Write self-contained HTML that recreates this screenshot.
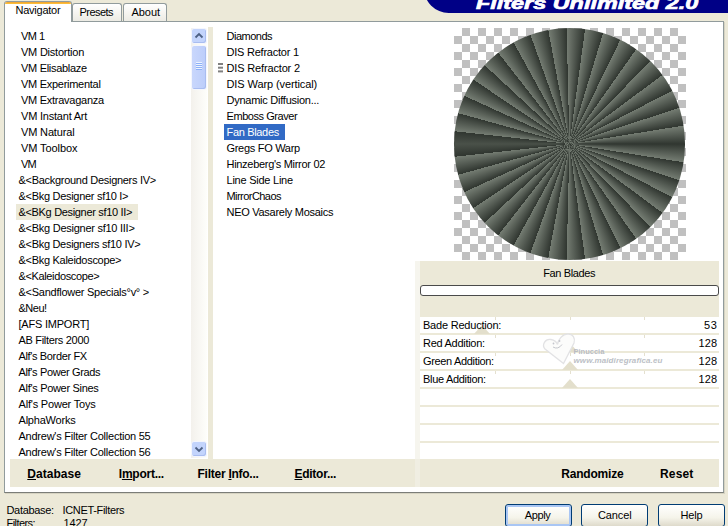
<!DOCTYPE html>
<html><head><meta charset="utf-8"><title>Filters Unlimited 2.0</title>
<style>
html,body{margin:0;padding:0}
body{width:728px;height:526px;overflow:hidden;background:#ece9d8;position:relative;font-family:"Liberation Sans",sans-serif;color:#000}
div,span{position:absolute;box-sizing:border-box}
.t{font-size:11px;line-height:16px;white-space:pre;height:16px}
.b{font-size:12px;line-height:16px;font-weight:bold;white-space:pre;height:16px}
.b u{text-decoration:underline;text-underline-offset:1px}
.ti{font-size:17px;line-height:24px;-webkit-text-stroke:0.7px #fff;font-weight:bold;font-style:italic;white-space:pre;transform-origin:0 50%}
#panel{left:4px;top:21px;width:720px;height:472px;background:#fff;border:1px solid #919b9c;border-bottom-color:#7b7d78;box-shadow:1px 1px 0 #d6d3c2}
#beige{left:10px;top:27px;width:709px;height:460px;background:#ece9d8}
.w{background:#fff}
.tab{border:1px solid #919b9c;border-bottom:none;border-radius:3px 3px 0 0;background:linear-gradient(#fff,#f4f3ee 60%,#ecebe4)}
.btn{top:504px;width:67px;height:23px;border:1px solid #003c74;border-radius:3px;background:linear-gradient(#fff,#f5f4ea 60%,#dedacb)}
.row{left:420px;width:299px;height:16px;background:#fff}
.tri{width:0;height:0;border-left:8.5px solid transparent;border-right:8.5px solid transparent;border-bottom:9px solid #e3dfcc}
</style></head><body>
<!-- title banner -->
<div style="left:424px;top:-37px;width:320px;height:49.8px;border-radius:24.7px 0 0 24.7px;background:#000086"></div>
<!-- main panel -->
<div id="panel"></div>
<div id="beige"></div>
<!-- tabs -->
<div class="tab" style="left:72px;top:3px;width:50px;height:18px"></div>
<div class="tab" style="left:123px;top:3px;width:44px;height:18px"></div>
<div style="left:5px;top:21px;width:66px;height:1px;background:#fff"></div>
<div style="left:4px;top:1px;width:68px;height:20px;background:#fff;border:1px solid #919b9c;border-bottom:none;border-radius:3px 3px 0 0;overflow:hidden"><div style="left:-1px;top:-1px;width:68px;height:3px;background:linear-gradient(#e68b2c,#ffc73c)"></div></div>
<!-- list 1 -->
<div class="w" style="left:10px;top:27px;width:198px;height:432px"></div>
<div style="left:16px;top:204px;width:122px;height:16px;background:#ece9d8"></div>
<!-- scrollbar -->
<div style="left:191px;top:28px;width:16px;height:430px;background:linear-gradient(90deg,#f3f1ec,#fefefb)"></div>
<div style="left:191px;top:28px;width:16px;height:16px;border:1px solid #f4f6fd;border-radius:3px;background:#c3d4fc;box-shadow:inset -1px -1px 0 #a9bdf0"></div>
<svg style="position:absolute;left:191px;top:28px" width="16" height="16"><path d="M4.5 9.5 L8 6 L11.5 9.5" fill="none" stroke="#4d6185" stroke-width="1.8"/></svg>
<div style="left:191px;top:45px;width:16px;height:44.5px;border:1px solid #f4f6fd;border-radius:3px;background:linear-gradient(90deg,#c9d7fc,#bccdfa);box-shadow:inset -1px -1px 0 #a9bdf0"></div>
<div style="left:196px;top:62px;width:6px;height:1px;background:#eef4fe;box-shadow:0 1px 0 #8cb0f8,0 2px 0 #eef4fe,0 3px 0 #8cb0f8,0 4px 0 #eef4fe,0 5px 0 #8cb0f8,0 6px 0 #eef4fe,0 7px 0 #8cb0f8"></div>
<div style="left:191px;top:441px;width:16px;height:16px;border:1px solid #f4f6fd;border-radius:3px;background:#c3d4fc;box-shadow:inset -1px -1px 0 #a9bdf0"></div>
<svg style="position:absolute;left:191px;top:441px" width="16" height="16"><path d="M4.5 6.5 L8 10 L11.5 6.5" fill="none" stroke="#4d6185" stroke-width="1.8"/></svg>
<!-- list 2 -->
<div class="w" style="left:213px;top:27px;width:202px;height:432px"></div>
<div style="left:224px;top:124px;width:61px;height:16px;background:#316ac5"></div>
<div style="left:218px;top:62.7px;width:5px;height:2.6px;background:#808080;box-shadow:0 3.7px 0 #808080,0 7.4px 0 #808080"></div>
<!-- divider -->
<div style="left:415px;top:27px;width:5px;height:234px;background:#fff"></div>
<div style="left:415px;top:261px;width:5px;height:198px;background:#f6f5ee"></div>
<div style="left:415px;top:459px;width:5px;height:28px;background:#f0eee2"></div>
<!-- preview -->
<div class="w" style="left:420px;top:27px;width:299px;height:234px"></div>
<div style="left:454px;top:28px;width:232px;height:232px;background:conic-gradient(#c0c0c0 0 90deg,#fff 90deg 180deg,#c0c0c0 180deg 270deg,#fff 270deg) 0 0/16px 16px"></div>
<div style="left:453.75px;top:28.25px;width:231.5px;height:231.5px;border-radius:50%;background:conic-gradient(from 0deg at 115.45px 115.95px,#6a7168 0.00deg,#303630 7.74deg,#747c72 7.74deg,#303630 16.88deg,#747c72 16.88deg,#303630 26.02deg,#747c72 26.02deg,#303630 35.16deg,#747c72 35.16deg,#303630 44.30deg,#747c72 44.30deg,#303630 53.44deg,#747c72 53.44deg,#303630 62.58deg,#747c72 62.58deg,#303630 71.72deg,#747c72 71.72deg,#303630 80.86deg,#747c72 80.86deg,#303630 90.00deg,#747c72 99.14deg,#303630 99.14deg,#747c72 108.28deg,#303630 108.28deg,#747c72 117.42deg,#303630 117.42deg,#747c72 126.56deg,#303630 126.56deg,#747c72 135.70deg,#303630 135.70deg,#747c72 144.84deg,#303630 144.84deg,#747c72 153.98deg,#303630 153.98deg,#747c72 163.12deg,#303630 163.12deg,#747c72 172.26deg,#303630 172.26deg,#747c72 181.40deg,#303630 181.40deg,#747c72 190.54deg,#303630 190.54deg,#747c72 199.68deg,#303630 199.68deg,#747c72 208.82deg,#303630 208.82deg,#747c72 217.96deg,#303630 217.96deg,#747c72 227.10deg,#303630 227.10deg,#747c72 236.24deg,#303630 236.24deg,#747c72 245.38deg,#303630 245.38deg,#747c72 254.52deg,#303630 254.52deg,#747c72 263.66deg,#303630 263.66deg,#4a5149 270.00deg,#303630 276.34deg,#747c72 276.34deg,#303630 285.48deg,#747c72 285.48deg,#303630 294.62deg,#747c72 294.62deg,#303630 303.76deg,#747c72 303.76deg,#303630 312.90deg,#747c72 312.90deg,#303630 322.04deg,#747c72 322.04deg,#303630 331.18deg,#747c72 331.18deg,#303630 340.32deg,#747c72 340.32deg,#303630 349.46deg,#747c72 349.46deg,#303630 358.60deg,#747c72 358.60deg,#6a7168 360.00deg)"></div>
<!-- progress -->
<div style="left:420px;top:285px;width:299px;height:11px;background:#fff;border:1px solid #4a4a4a;border-radius:3px"></div>
<!-- param rows -->
<div class="row" style="top:317px"></div><div class="row" style="top:335px"></div><div class="row" style="top:353px"></div><div class="row" style="top:371px"></div>
<div class="row" style="top:389px"></div><div class="row" style="top:407px"></div><div class="row" style="top:425px"></div><div class="row" style="top:443px"></div>
<div style="left:495px;top:317px;width:1px;height:3px;background:#e4e0cf"></div><div style="left:570px;top:317px;width:1px;height:3px;background:#e4e0cf"></div><div style="left:644px;top:317px;width:1px;height:3px;background:#e4e0cf"></div><div style="left:495px;top:335px;width:1px;height:3px;background:#e4e0cf"></div><div style="left:570px;top:335px;width:1px;height:3px;background:#e4e0cf"></div><div style="left:644px;top:335px;width:1px;height:3px;background:#e4e0cf"></div><div style="left:495px;top:353px;width:1px;height:3px;background:#e4e0cf"></div><div style="left:570px;top:353px;width:1px;height:3px;background:#e4e0cf"></div><div style="left:644px;top:353px;width:1px;height:3px;background:#e4e0cf"></div><div style="left:495px;top:371px;width:1px;height:3px;background:#e4e0cf"></div><div style="left:570px;top:371px;width:1px;height:3px;background:#e4e0cf"></div><div style="left:644px;top:371px;width:1px;height:3px;background:#e4e0cf"></div>
<div class="tri" style="left:473.5px;top:324.5px"></div>
<div class="tri" style="left:562px;top:342.5px"></div>
<div class="tri" style="left:562px;top:360.5px"></div>
<div class="tri" style="left:562px;top:378.5px"></div>
<svg style="position:absolute;left:540px;top:330px" width="40" height="40" viewBox="540 330 40 40"><path d="M563.5 363.5 L545 349 C541.5 345 545 338.5 551 339.5 C554 340 556.5 342 557.5 344.5 C558 340 562 334 568 334 C573 334 575.5 338 574 343 Z" fill="#fcfcfb" stroke="#e2e2e4" stroke-width="1.3"/><circle cx="553.5" cy="343.5" r="0.9" fill="#c4c6cc"/><circle cx="559.5" cy="341" r="0.9" fill="#c4c6cc"/><path d="M553 347 Q558 350 562 344.5" fill="none" stroke="#c4c6cc" stroke-width="1"/></svg>
<span style="left:573.5px;top:346.5px;font-size:7.5px;line-height:9px;font-weight:bold;color:#b9bcc4;white-space:pre">Pinuccia</span>
<span style="left:573.5px;top:355.5px;font-size:8px;line-height:10px;font-style:italic;font-weight:bold;color:#bcbfc6;white-space:pre;letter-spacing:0.1px">www.maidiregrafica.eu</span>
<!-- bottom buttons -->
<div class="btn" style="left:505px;box-shadow:inset 0 0 0 2px #a9c6f4"></div>
<div class="btn" style="left:581px"></div>
<div class="btn" style="left:658px"></div>
<span class="t" style="left:21.00px;top:27.69px;letter-spacing:-0.485px;">VM 1</span>
<span class="t" style="left:21.00px;top:43.69px;letter-spacing:-0.225px;">VM Distortion</span>
<span class="t" style="left:21.00px;top:59.69px;letter-spacing:-0.298px;">VM Elisablaze</span>
<span class="t" style="left:21.00px;top:75.69px;letter-spacing:-0.279px;">VM Experimental</span>
<span class="t" style="left:21.00px;top:91.69px;letter-spacing:-0.264px;">VM Extravaganza</span>
<span class="t" style="left:21.00px;top:107.69px;letter-spacing:-0.210px;">VM Instant Art</span>
<span class="t" style="left:21.00px;top:123.69px;letter-spacing:-0.152px;">VM Natural</span>
<span class="t" style="left:21.00px;top:139.69px;letter-spacing:-0.086px;">VM Toolbox</span>
<span class="t" style="left:21.00px;top:155.69px;letter-spacing:-0.800px;">VM</span>
<span class="t" style="left:18.50px;top:171.69px;letter-spacing:-0.288px;">&amp;&lt;Background Designers IV&gt;</span>
<span class="t" style="left:18.50px;top:187.69px;letter-spacing:-0.293px;">&amp;&lt;Bkg Designer sf10 I&gt;</span>
<span class="t" style="left:18.50px;top:203.69px;letter-spacing:-0.329px;">&amp;&lt;BKg Designer sf10 II&gt;</span>
<span class="t" style="left:18.50px;top:219.69px;letter-spacing:-0.259px;">&amp;&lt;Bkg Designer sf10 III&gt;</span>
<span class="t" style="left:18.50px;top:235.69px;letter-spacing:-0.300px;">&amp;&lt;Bkg Designers sf10 IV&gt;</span>
<span class="t" style="left:18.50px;top:251.69px;letter-spacing:-0.290px;">&amp;&lt;Bkg Kaleidoscope&gt;</span>
<span class="t" style="left:18.50px;top:267.69px;letter-spacing:-0.365px;">&amp;&lt;Kaleidoscope&gt;</span>
<span class="t" style="left:18.50px;top:283.69px;letter-spacing:-0.259px;">&amp;&lt;Sandflower Specials°v° &gt;</span>
<span class="t" style="left:18.50px;top:299.69px;letter-spacing:-0.504px;">&amp;Neu!</span>
<span class="t" style="left:18.50px;top:315.69px;letter-spacing:-0.217px;">[AFS IMPORT]</span>
<span class="t" style="left:18.50px;top:331.69px;letter-spacing:-0.313px;">AB Filters 2000</span>
<span class="t" style="left:18.50px;top:347.69px;letter-spacing:-0.356px;">Alf&#x27;s Border FX</span>
<span class="t" style="left:18.50px;top:363.69px;letter-spacing:-0.349px;">Alf&#x27;s Power Grads</span>
<span class="t" style="left:18.50px;top:379.69px;letter-spacing:-0.309px;">Alf&#x27;s Power Sines</span>
<span class="t" style="left:18.50px;top:395.69px;letter-spacing:-0.196px;">Alf&#x27;s Power Toys</span>
<span class="t" style="left:18.50px;top:411.69px;letter-spacing:-0.211px;">AlphaWorks</span>
<span class="t" style="left:18.50px;top:427.69px;letter-spacing:-0.244px;">Andrew&#x27;s Filter Collection 55</span>
<span class="t" style="left:18.50px;top:443.69px;letter-spacing:-0.244px;">Andrew&#x27;s Filter Collection 56</span>
<span class="t" style="left:226.50px;top:27.69px;letter-spacing:-0.489px;">Diamonds</span>
<span class="t" style="left:226.50px;top:43.69px;letter-spacing:-0.227px;">DIS Refractor 1</span>
<span class="t" style="left:226.50px;top:59.69px;letter-spacing:-0.156px;">DIS Refractor 2</span>
<span class="t" style="left:226.50px;top:75.69px;letter-spacing:-0.096px;">DIS Warp (vertical)</span>
<span class="t" style="left:226.50px;top:91.69px;letter-spacing:-0.250px;">Dynamic Diffusion...</span>
<span class="t" style="left:226.50px;top:107.69px;letter-spacing:-0.437px;">Emboss Graver</span>
<span class="t" style="left:226.50px;top:123.69px;letter-spacing:-0.327px;color:#fff;">Fan Blades</span>
<span class="t" style="left:226.50px;top:139.69px;letter-spacing:-0.300px;">Gregs FO Warp</span>
<span class="t" style="left:226.50px;top:155.69px;letter-spacing:-0.299px;">Hinzeberg&#x27;s Mirror 02</span>
<span class="t" style="left:226.50px;top:171.69px;letter-spacing:-0.239px;">Line Side Line</span>
<span class="t" style="left:226.50px;top:187.69px;letter-spacing:-0.551px;">MirrorChaos</span>
<span class="t" style="left:226.50px;top:203.69px;letter-spacing:-0.277px;">NEO Vasarely Mosaics</span>
<span class="t" style="left:543.20px;top:265.19px;letter-spacing:-0.361px;">Fan Blades</span>
<span class="t" style="left:423.00px;top:316.79px;letter-spacing:-0.213px;">Bade Reduction:</span>
<span class="t" style="left:423.00px;top:334.79px;letter-spacing:-0.282px;">Red Addition:</span>
<span class="t" style="left:423.00px;top:352.79px;letter-spacing:-0.334px;">Green Addition:</span>
<span class="t" style="left:423.00px;top:370.79px;letter-spacing:-0.317px;">Blue Addition:</span>
<span class="t" style="left:704.00px;top:316.79px;letter-spacing:0.600px;">53</span>
<span class="t" style="left:698.60px;top:334.79px;letter-spacing:0.082px;">128</span>
<span class="t" style="left:698.60px;top:352.79px;letter-spacing:0.082px;">128</span>
<span class="t" style="left:698.60px;top:370.79px;letter-spacing:0.082px;">128</span>
<span class="b" style="left:27.30px;top:465.84px;letter-spacing:0.030px;"><u>D</u>atabase</span>
<span class="b" style="left:118.80px;top:465.84px;letter-spacing:-0.250px;">I<u>m</u>port...</span>
<span class="b" style="left:197.50px;top:465.84px;letter-spacing:-0.256px;">Filter <u>I</u>nfo...</span>
<span class="b" style="left:294.50px;top:465.84px;letter-spacing:-0.271px;"><u>E</u>ditor...</span>
<span class="b" style="left:561.30px;top:465.84px;letter-spacing:-0.204px;">Randomize</span>
<span class="b" style="left:660.00px;top:465.84px;letter-spacing:0.153px;">Reset</span>
<span class="t" style="left:6.50px;top:501.69px;letter-spacing:-0.324px;">Database:</span>
<span class="t" style="left:62.50px;top:501.69px;letter-spacing:-0.333px;">ICNET-Filters</span>
<span class="t" style="left:6.50px;top:514.69px;letter-spacing:-0.563px;">Filters:</span>
<span class="t" style="left:63.50px;top:514.69px;letter-spacing:-0.118px;">1427</span>
<span class="t" style="left:524.80px;top:507.19px;letter-spacing:-0.404px;">Apply</span>
<span class="t" style="left:597.90px;top:507.19px;letter-spacing:-0.099px;">Cancel</span>
<span class="t" style="left:680.60px;top:507.19px;letter-spacing:-0.202px;">Help</span>
<span class="t" style="left:15.50px;top:2.19px;letter-spacing:-0.239px;">Navigator</span>
<span class="t" style="left:79.50px;top:4.19px;letter-spacing:-0.549px;">Presets</span>
<span class="t" style="left:131.50px;top:4.19px;letter-spacing:-0.047px;">About</span>
<span class="ti" style="left:475.60px;top:-8.39px;transform:scaleX(1.3764);color:#fff;">Filters Unlimited 2.0</span>
</body></html>
